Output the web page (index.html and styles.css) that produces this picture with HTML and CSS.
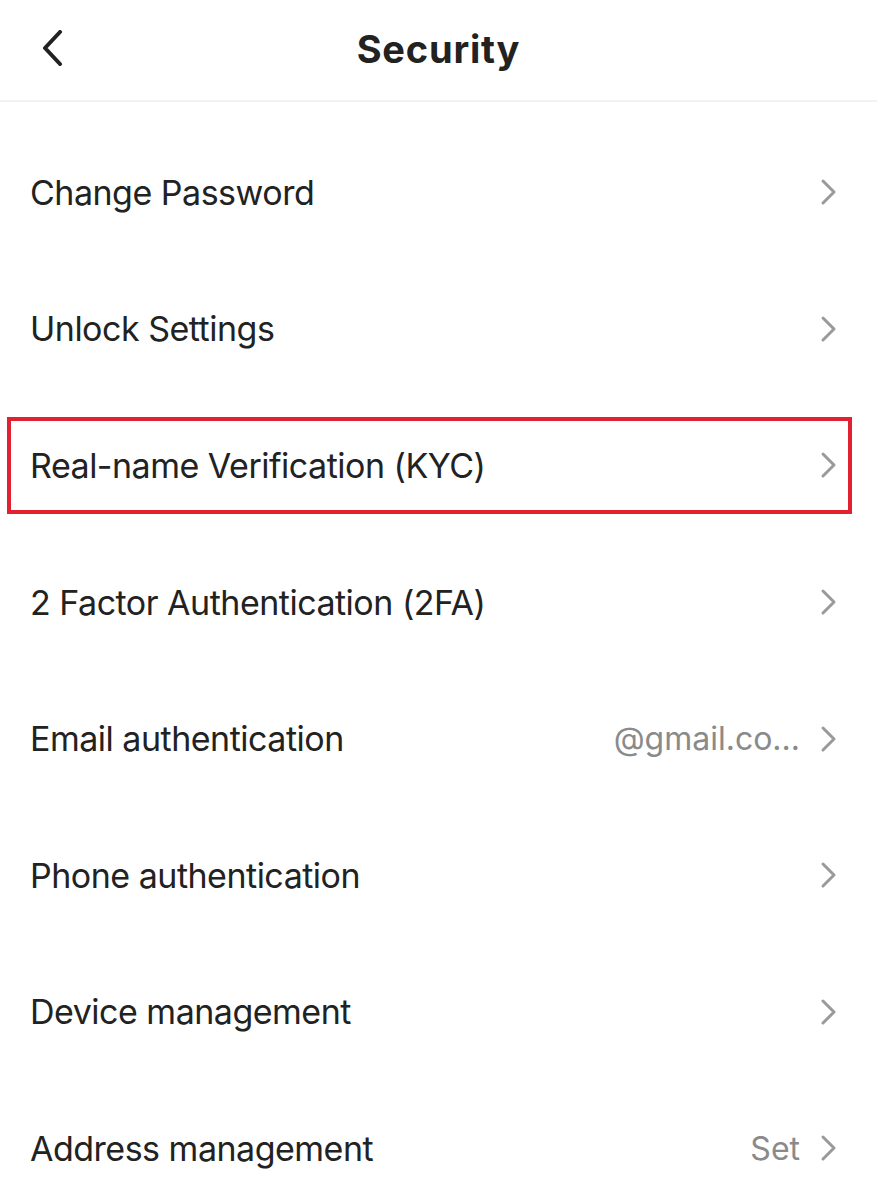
FILE: index.html
```html
<!DOCTYPE html>
<html>
<head>
<meta charset="utf-8">
<link rel="stylesheet" href="styles.css">
</head>
<body>
<div class="page">
  <header class="topbar">
    <div class="back">
      <svg width="24" height="36" viewBox="0 0 24 36"><path d="M19 2 L4 18 L19 34" fill="none" stroke="#222" stroke-width="4" stroke-linecap="round" stroke-linejoin="round"/></svg>
    </div>
    <h1 class="title">Security</h1>
  </header>
  <ul class="list">
    <li class="row"><span class="label">Change Password</span><span class="right"><svg class="chev" width="18" height="28" viewBox="0 0 18 28"><path d="M3 3 L14 14 L3 25" fill="none" stroke="#9a9a9a" stroke-width="3" stroke-linecap="round" stroke-linejoin="round"/></svg></span></li>
    <li class="row"><span class="label">Unlock Settings</span><span class="right"><svg class="chev" width="18" height="28" viewBox="0 0 18 28"><path d="M3 3 L14 14 L3 25" fill="none" stroke="#9a9a9a" stroke-width="3" stroke-linecap="round" stroke-linejoin="round"/></svg></span></li>
    <li class="row highlighted"><span class="label">Real-name Verification (KYC)</span><span class="right"><svg class="chev" width="18" height="28" viewBox="0 0 18 28"><path d="M3 3 L14 14 L3 25" fill="none" stroke="#9a9a9a" stroke-width="3" stroke-linecap="round" stroke-linejoin="round"/></svg></span></li>
    <li class="row"><span class="label">2 Factor Authentication (2FA)</span><span class="right"><svg class="chev" width="18" height="28" viewBox="0 0 18 28"><path d="M3 3 L14 14 L3 25" fill="none" stroke="#9a9a9a" stroke-width="3" stroke-linecap="round" stroke-linejoin="round"/></svg></span></li>
    <li class="row"><span class="label">Email authentication</span><span class="right"><span class="value">@gmail.co...</span><svg class="chev" width="18" height="28" viewBox="0 0 18 28"><path d="M3 3 L14 14 L3 25" fill="none" stroke="#9a9a9a" stroke-width="3" stroke-linecap="round" stroke-linejoin="round"/></svg></span></li>
    <li class="row"><span class="label">Phone authentication</span><span class="right"><svg class="chev" width="18" height="28" viewBox="0 0 18 28"><path d="M3 3 L14 14 L3 25" fill="none" stroke="#9a9a9a" stroke-width="3" stroke-linecap="round" stroke-linejoin="round"/></svg></span></li>
    <li class="row"><span class="label">Device management</span><span class="right"><svg class="chev" width="18" height="28" viewBox="0 0 18 28"><path d="M3 3 L14 14 L3 25" fill="none" stroke="#9a9a9a" stroke-width="3" stroke-linecap="round" stroke-linejoin="round"/></svg></span></li>
    <li class="row"><span class="label">Address management</span><span class="right"><span class="value">Set</span><svg class="chev" width="18" height="28" viewBox="0 0 18 28"><path d="M3 3 L14 14 L3 25" fill="none" stroke="#9a9a9a" stroke-width="3" stroke-linecap="round" stroke-linejoin="round"/></svg></span></li>
  </ul>
</div>
</body>
</html>
```
FILE: styles.css
```css
* { box-sizing: border-box; }
html, body {
  margin: 0;
  padding: 0;
  background: #ffffff;
}
body {
  font-family: Inter, "Noto Sans", "Liberation Sans", sans-serif;
  color: #222222;
  width: 877px;
  height: 1200px;
  overflow: hidden;
}
.topbar {
  position: relative;
  height: 102px;
  display: flex;
  align-items: center;
  justify-content: center;
  border-bottom: 2px solid #f2f2f2;
}
.back {
  position: absolute;
  left: 41px;
  top: 30px;
  display: flex;
}
.title {
  margin: 0;
  font-size: 38px;
  font-weight: 700;
  letter-spacing: 0.8px;
  color: #222222;
  margin-top: -2px;
}
.list {
  list-style: none;
  margin: 0;
  padding: 22px 0 0 0;
}
.row {
  height: 136.6px;
  display: flex;
  align-items: center;
  justify-content: space-between;
  padding: 0 39px 0 30px;
}
.label {
  font-size: 34px;
  font-weight: 400;
  color: #222222;
  letter-spacing: -0.5px;
}
.right {
  display: flex;
  align-items: center;
  gap: 20px;
}
.value {
  font-size: 32px;
  color: #8a8a8a;
}
.chev {
  display: block;
}
.highlighted {
  position: relative;
}
.highlighted::after {
  content: "";
  position: absolute;
  left: 7px;
  right: 25px;
  top: 20px;
  bottom: 20px;
  border: 4px solid #e3202f;
}
```
